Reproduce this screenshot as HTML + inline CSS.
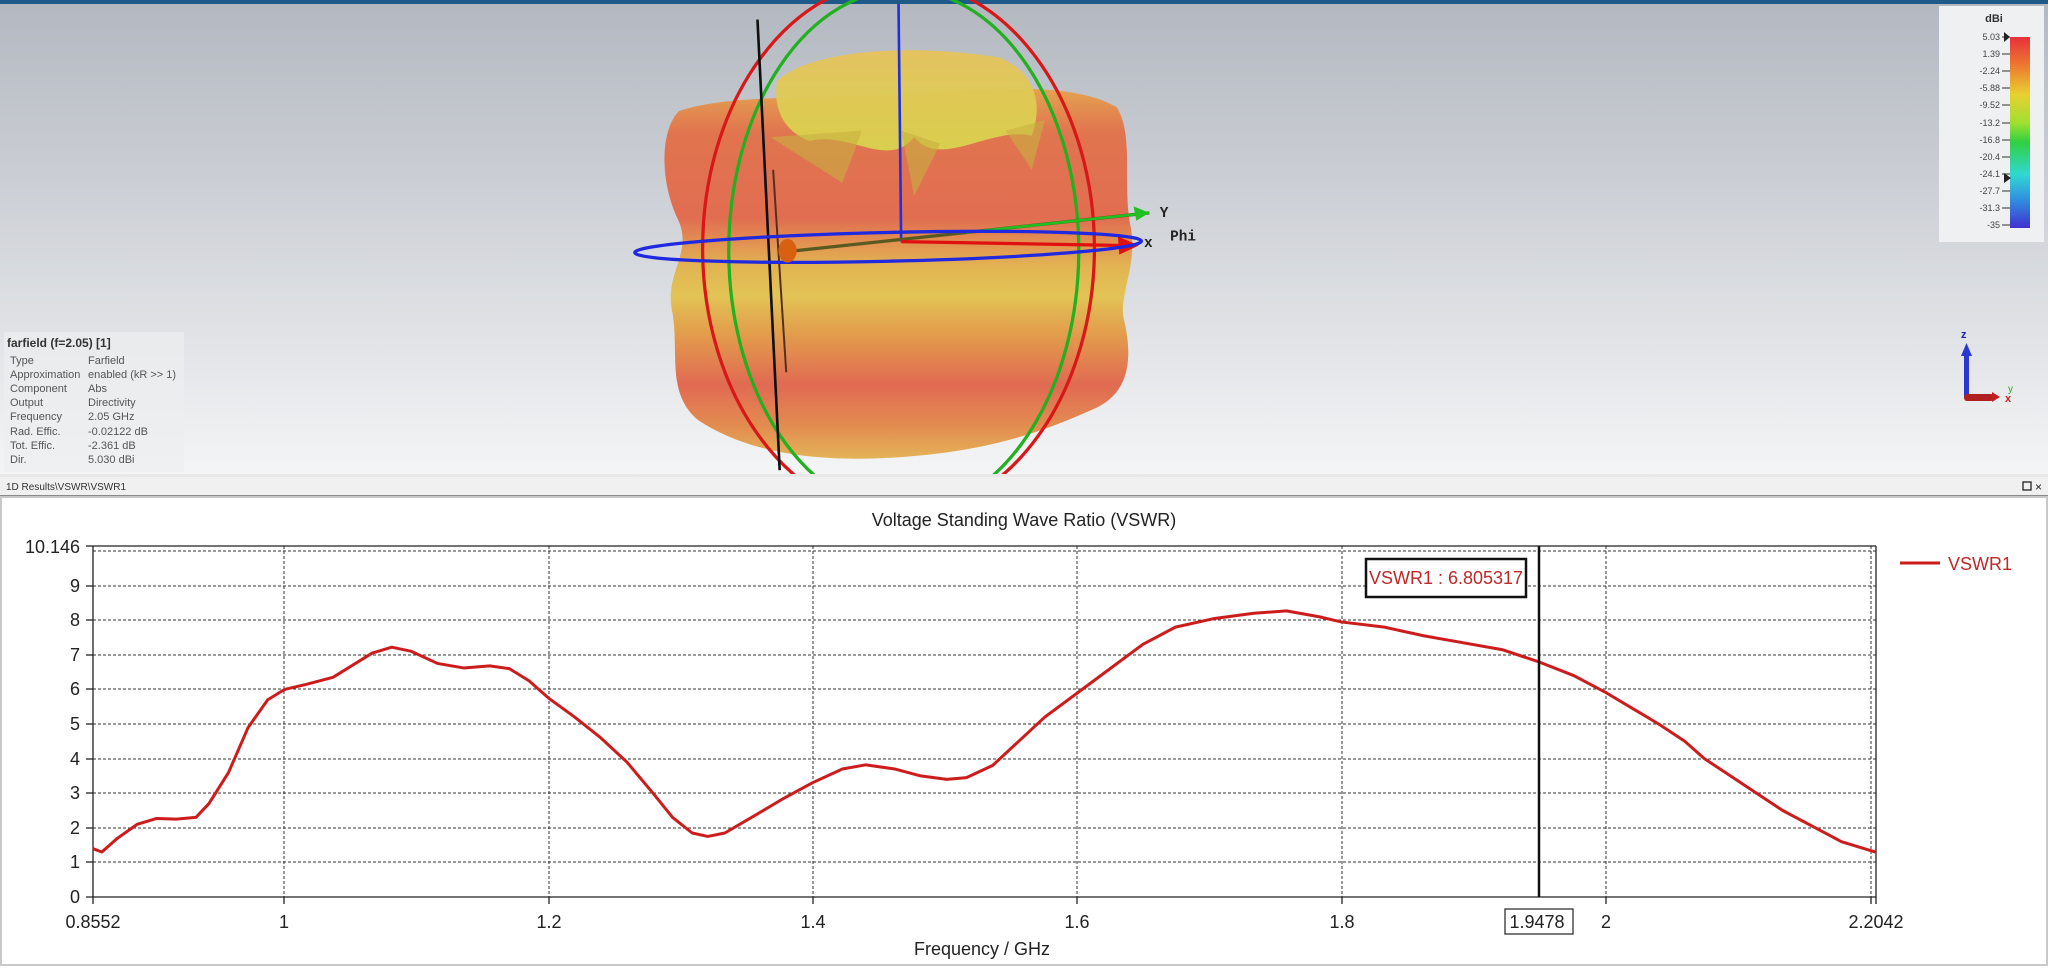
<!DOCTYPE html>
<html><head><meta charset="utf-8"><style>
html,body{margin:0;padding:0;width:2048px;height:968px;overflow:hidden;background:#fff;font-family:"Liberation Sans",sans-serif;}
</style></head><body>
<svg width="2048" height="968" viewBox="0 0 2048 968" xmlns="http://www.w3.org/2000/svg" style="position:absolute;left:0;top:0">
<defs>
<linearGradient id="bg" x1="0" y1="0" x2="0" y2="1">
<stop offset="0" stop-color="#b3b8c0"/><stop offset="0.5" stop-color="#d3d6db"/><stop offset="1" stop-color="#f4f5f6"/>
</linearGradient>
<linearGradient id="body" x1="0" y1="0" x2="0" y2="1">
<stop offset="0" stop-color="#e6a04a"/><stop offset="0.12" stop-color="#e27048"/><stop offset="0.35" stop-color="#e2684a"/>
<stop offset="0.48" stop-color="#e3b24a"/><stop offset="0.56" stop-color="#e2c24e"/><stop offset="0.66" stop-color="#e39a44"/>
<stop offset="0.8" stop-color="#e0634a"/><stop offset="0.92" stop-color="#e28a48"/><stop offset="1" stop-color="#e2b050"/>
</linearGradient>
<linearGradient id="top" x1="0" y1="0" x2="0" y2="1">
<stop offset="0" stop-color="#e6c25a"/><stop offset="1" stop-color="#d8d44e"/>
</linearGradient>
<linearGradient id="cb" x1="0" y1="0" x2="0" y2="1">
<stop offset="0" stop-color="#e8303a"/><stop offset="0.15" stop-color="#ec7a30"/><stop offset="0.3" stop-color="#e8d030"/>
<stop offset="0.45" stop-color="#a0e030"/><stop offset="0.55" stop-color="#30d040"/><stop offset="0.72" stop-color="#30d8d0"/>
<stop offset="0.85" stop-color="#3090e0"/><stop offset="1" stop-color="#4030d0"/>
</linearGradient>
</defs>
<rect x="0" y="0" width="2048" height="476" fill="url(#bg)"/>
<rect x="0" y="0" width="2048" height="4" fill="#1d5a8a"/>
<g transform="scale(1.306)">
<path d="M520,85 C560,72 620,76 690,72 C760,68 820,62 855,82 C868,102 860,140 865,170 C872,200 858,222 860,242 C870,282 860,302 840,312 C800,330 760,345 690,350 C620,355 570,345 535,322 C510,302 520,270 515,240 C508,210 530,195 520,170 C505,140 505,100 520,85Z" fill="url(#body)" opacity="0.95"/>
<path d="M595,62 C620,38 700,33 765,44 C795,56 798,82 790,104 C760,96 720,130 700,105 C680,130 650,100 620,108 C598,100 592,80 595,62Z" fill="url(#top)" opacity="0.95"/>
<path d="M590,105 L660,100 L645,140 Z M690,100 L720,110 L700,150 Z M770,100 L800,92 L790,130 Z" fill="#c8b040" opacity="0.6"/>
<ellipse cx="688" cy="190" rx="150" ry="205" fill="none" stroke="#d81818" stroke-width="2.5"/>
<ellipse cx="692" cy="192" rx="134" ry="200" fill="none" stroke="#20b020" stroke-width="2.5"/>
<line x1="688" y1="3" x2="690" y2="185" stroke="#2030e0" stroke-width="2"/>
<line x1="580" y1="15" x2="597" y2="360" stroke="#101010" stroke-width="2"/>
<line x1="592" y1="130" x2="602" y2="285" stroke="#503020" stroke-width="1.5"/>
<line x1="600" y1="193" x2="880" y2="163" stroke="#5a5a20" stroke-width="2.5"/>
<line x1="740" y1="178" x2="880" y2="163" stroke="#20c020" stroke-width="2"/>
<polygon points="880,163 868,158 870,169" fill="#20c020"/>
<line x1="690" y1="185" x2="860" y2="188" stroke="#e01010" stroke-width="2.5"/>
<polygon points="872,188 856,181 857,195" fill="#e01010"/>
<ellipse cx="680" cy="189" rx="194" ry="11" transform="rotate(-1.3 680 189)" fill="none" stroke="#2028e0" stroke-width="2.5"/>
<ellipse cx="603" cy="192" rx="7" ry="9" fill="#d86010"/>
<text x="888" y="166" font-family="Liberation Mono,monospace" font-weight="bold" font-size="11" fill="#222">Y</text>
<text x="896" y="184" font-family="Liberation Mono,monospace" font-weight="bold" font-size="11" fill="#222">Phi</text>
<text x="876" y="189" font-family="Liberation Mono,monospace" font-weight="bold" font-size="11" fill="#222">x</text>
</g>
<rect x="4" y="332" width="180" height="140" fill="#eceef0" opacity="0.7"/>
<g font-size="11" fill="#555">
<text x="7" y="347" font-weight="bold" font-size="12" fill="#333">farfield (f=2.05) [1]</text>
<text x="10" y="364">Type</text><text x="88" y="364">Farfield</text>
<text x="10" y="378">Approximation</text><text x="88" y="378">enabled (kR &gt;&gt; 1)</text>
<text x="10" y="392">Component</text><text x="88" y="392">Abs</text>
<text x="10" y="406">Output</text><text x="88" y="406">Directivity</text>
<text x="10" y="420">Frequency</text><text x="88" y="420">2.05 GHz</text>
<text x="10" y="435">Rad. Effic.</text><text x="88" y="435">-0.02122 dB</text>
<text x="10" y="449">Tot. Effic.</text><text x="88" y="449">-2.361 dB</text>
<text x="10" y="463">Dir.</text><text x="88" y="463">5.030 dBi</text>
</g>
<rect x="1939" y="6" width="105" height="236" fill="#eef0f2"/>
<text x="1994" y="22" font-size="11" font-weight="bold" fill="#333" text-anchor="middle">dBi</text>
<rect x="2010" y="37" width="20" height="191" fill="url(#cb)"/>
<g font-size="9" fill="#444" text-anchor="end">
<text x="2000" y="40">5.03</text><text x="2000" y="57">1.39</text><text x="2000" y="74">-2.24</text><text x="2000" y="91">-5.88</text>
<text x="2000" y="108">-9.52</text><text x="2000" y="126">-13.2</text><text x="2000" y="143">-16.8</text><text x="2000" y="160">-20.4</text>
<text x="2000" y="177">-24.1</text><text x="2000" y="194">-27.7</text><text x="2000" y="211">-31.3</text><text x="2000" y="228">-35</text>
</g>
<g stroke="#333" stroke-width="1">
<line x1="2002" y1="37" x2="2010" y2="37"/><line x1="2002" y1="54" x2="2010" y2="54"/><line x1="2002" y1="71" x2="2010" y2="71"/><line x1="2002" y1="88" x2="2010" y2="88"/><line x1="2002" y1="105" x2="2010" y2="105"/><line x1="2002" y1="123" x2="2010" y2="123"/><line x1="2002" y1="140" x2="2010" y2="140"/><line x1="2002" y1="157" x2="2010" y2="157"/><line x1="2002" y1="174" x2="2010" y2="174"/><line x1="2002" y1="191" x2="2010" y2="191"/><line x1="2002" y1="208" x2="2010" y2="208"/><line x1="2002" y1="225" x2="2010" y2="225"/>
</g>
<polygon points="2004,32 2010,37 2004,42" fill="#222"/><polygon points="2004,173 2011,178 2004,183" fill="#222"/>
<text x="1961" y="338" font-size="11" font-weight="bold" fill="#2020a0">z</text>
<rect x="1964" y="352" width="5" height="46" fill="#2838d0"/>
<polygon points="1961,356 1966.5,343 1972,356" fill="#2838d0"/>
<rect x="1964" y="394" width="30" height="7" rx="3" fill="#b02020"/>
<polygon points="1992,392 2000,397 1992,402" fill="#c02020"/>
<text x="2005" y="402" font-size="11" font-weight="bold" fill="#d02020">x</text>
<text x="2008" y="392" font-size="10" fill="#30a030">y</text>
<rect x="0" y="474" width="2048" height="3" fill="#e8e8e8"/>
<rect x="0" y="477" width="2048" height="19" fill="#f0f0f0"/>
<rect x="0" y="495" width="2048" height="2" fill="#8a8a8a"/>
<text x="6" y="490" font-size="10" fill="#333">1D Results\VSWR\VSWR1</text>
<rect x="2023" y="482" width="8" height="8" fill="none" stroke="#222" stroke-width="1.3"/>
<text x="2035" y="491" font-size="12" fill="#222">×</text>
<rect x="0" y="497" width="2048" height="471" fill="#fff"/>
<rect x="1" y="497" width="2046" height="468" fill="none" stroke="#c8c8c8" stroke-width="2"/>
<text x="1024" y="526" font-size="18" fill="#222" text-anchor="middle">Voltage Standing Wave Ratio (VSWR)</text>
<g stroke="#333" stroke-width="1" stroke-dasharray="3,2">
<line x1="93" y1="551" x2="1876" y2="551"/>
<line x1="93" y1="586" x2="1876" y2="586"/><line x1="93" y1="620" x2="1876" y2="620"/><line x1="93" y1="655" x2="1876" y2="655"/>
<line x1="93" y1="689" x2="1876" y2="689"/><line x1="93" y1="724" x2="1876" y2="724"/><line x1="93" y1="759" x2="1876" y2="759"/>
<line x1="93" y1="793" x2="1876" y2="793"/><line x1="93" y1="828" x2="1876" y2="828"/><line x1="93" y1="862" x2="1876" y2="862"/>
<line x1="284" y1="546" x2="284" y2="897"/><line x1="549" y1="546" x2="549" y2="897"/><line x1="813" y1="546" x2="813" y2="897"/>
<line x1="1077" y1="546" x2="1077" y2="897"/><line x1="1342" y1="546" x2="1342" y2="897"/><line x1="1606" y1="546" x2="1606" y2="897"/>
<line x1="1871" y1="546" x2="1871" y2="897"/>
</g>
<g stroke="#222" stroke-width="1.3">
<line x1="93" y1="546" x2="1876" y2="546"/><line x1="1876" y1="546" x2="1876" y2="904"/>
<line x1="93" y1="546" x2="93" y2="904"/><line x1="86" y1="897" x2="1876" y2="897"/>
<line x1="86" y1="546" x2="93" y2="546"/><line x1="86" y1="586" x2="93" y2="586"/><line x1="86" y1="620" x2="93" y2="620"/><line x1="86" y1="655" x2="93" y2="655"/><line x1="86" y1="689" x2="93" y2="689"/><line x1="86" y1="724" x2="93" y2="724"/><line x1="86" y1="759" x2="93" y2="759"/><line x1="86" y1="793" x2="93" y2="793"/><line x1="86" y1="828" x2="93" y2="828"/><line x1="86" y1="862" x2="93" y2="862"/>
<line x1="284" y1="897" x2="284" y2="904"/><line x1="549" y1="897" x2="549" y2="904"/><line x1="813" y1="897" x2="813" y2="904"/><line x1="1077" y1="897" x2="1077" y2="904"/><line x1="1342" y1="897" x2="1342" y2="904"/><line x1="1606" y1="897" x2="1606" y2="904"/><line x1="1871" y1="897" x2="1871" y2="904"/>
</g>
<g font-size="18" fill="#222" text-anchor="end">
<text x="80" y="553">10.146</text><text x="80" y="592">9</text><text x="80" y="626">8</text><text x="80" y="661">7</text><text x="80" y="695">6</text>
<text x="80" y="730">5</text><text x="80" y="765">4</text><text x="80" y="799">3</text><text x="80" y="834">2</text><text x="80" y="868">1</text><text x="80" y="903">0</text>
</g>
<g font-size="18" fill="#222" text-anchor="middle">
<text x="93" y="928">0.8552</text><text x="284" y="928">1</text><text x="549" y="928">1.2</text><text x="813" y="928">1.4</text>
<text x="1077" y="928">1.6</text><text x="1342" y="928">1.8</text><text x="1606" y="928">2</text><text x="1876" y="928">2.2042</text>
<text x="1537" y="928">1.9478</text>
<text x="982" y="955">Frequency / GHz</text>
</g>
<rect x="1505" y="909" width="68" height="25" fill="none" stroke="#222" stroke-width="1.2"/>
<g transform="translate(0,897) scale(1.306,-34.6)">
<polyline vector-effect="non-scaling-stroke" fill="none" stroke="#cc1c1c" stroke-width="3" stroke-linejoin="round"
points="71,1.4 78,1.3 90,1.7 105,2.1 120,2.27 135,2.25 150,2.3 160,2.7 175,3.6 190,4.9 205,5.7 218,6.0 235,6.15 255,6.35 270,6.7 285,7.05 300,7.22 315,7.1 335,6.75 355,6.62 375,6.68 390,6.6 405,6.25 420,5.75 440,5.2 460,4.6 480,3.9 500,3.0 515,2.3 530,1.85 542,1.75 555,1.85 580,2.4 600,2.85 622,3.3 645,3.7 663,3.82 685,3.7 705,3.5 725,3.4 740,3.45 760,3.8 780,4.5 800,5.2 825,5.9 850,6.6 875,7.3 900,7.8 930,8.05 960,8.2 985,8.27 1010,8.1 1027,7.95 1060,7.8 1090,7.55 1120,7.35 1150,7.15 1178,6.8 1205,6.4 1230,5.9 1250,5.45 1270,5.0 1290,4.5 1305,4.0 1325,3.5 1345,3.0 1365,2.5 1390,2.0 1410,1.6 1436,1.3"/>
</g>
<line x1="1539" y1="546" x2="1539" y2="897" stroke="#111" stroke-width="2.5"/>
<rect x="1366" y="559" width="160" height="38" fill="#fff" stroke="#111" stroke-width="2.5"/>
<text x="1446" y="584" font-size="18" fill="#c02828" text-anchor="middle">VSWR1 : 6.805317</text>
<line x1="1900" y1="563" x2="1940" y2="563" stroke="#cc1c1c" stroke-width="3"/>
<text x="1948" y="570" font-size="18" fill="#c02828">VSWR1</text>
</svg>
</body></html>
